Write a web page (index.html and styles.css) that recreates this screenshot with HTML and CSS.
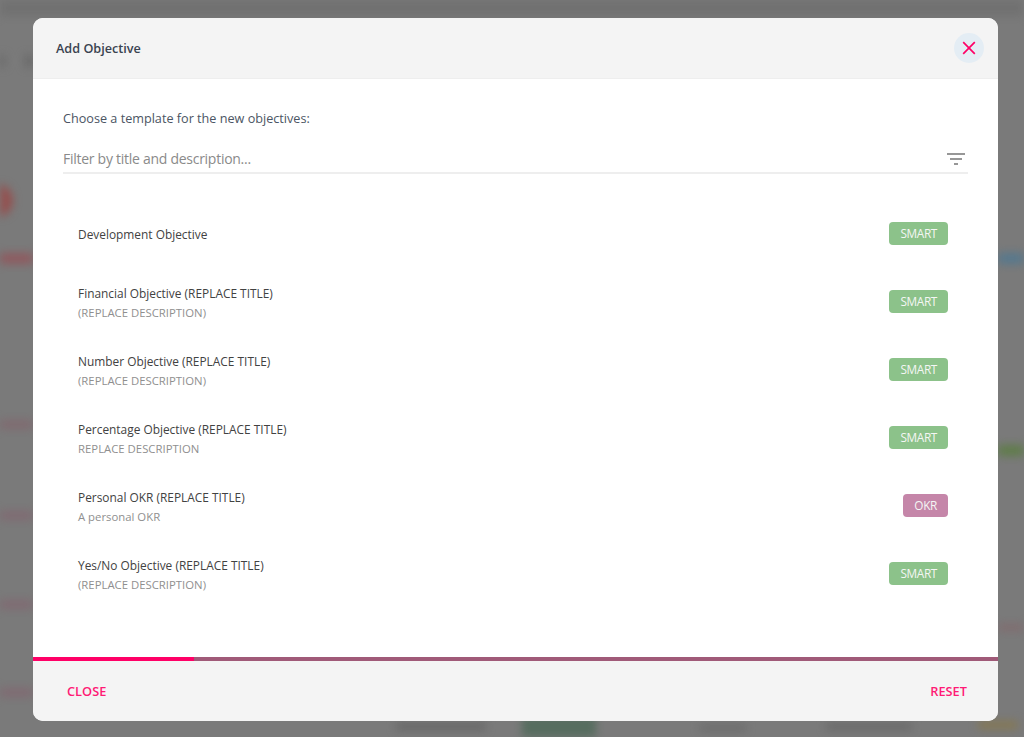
FILE: index.html
```html
<!DOCTYPE html>
<html lang="en">
<head>
<meta charset="utf-8">
<title>Add Objective</title>
<link rel="stylesheet" href="styles.css">
</head>
<body>
<div class="backdrop" aria-hidden="true">
  <span class="blob blob-topband"></span>
  <span class="blob blob-nav-a"></span>
  <span class="blob blob-nav-b"></span>
  <span class="blob blob-avatar"></span>
  <span class="blob blob-red"></span>
  <span class="blob blob-blue"></span>
  <span class="blob blob-lime"></span>
  <span class="blob blob-pink-a"></span>
  <span class="blob blob-pink-b"></span>
  <span class="blob blob-pink-c"></span>
  <span class="blob blob-pink-d"></span>
  <span class="blob blob-pink-e"></span>
  <span class="blob blob-text-a"></span>
  <span class="blob blob-green"></span>
  <span class="blob blob-text-b"></span>
  <span class="blob blob-text-c"></span>
  <span class="blob blob-yellow"></span>
</div>
<main class="modal">
  <header class="modal-header">
    <h1 class="modal-title">Add Objective</h1>
    <button class="close-btn" type="button" aria-label="Close">
      <svg class="close-icon" viewBox="0 0 14 14"><path d="M1.2 1.2l11.6 11.6M12.8 1.2L1.2 12.8"/></svg>
    </button>
  </header>
  <section class="modal-body">
    <p class="intro">Choose a template for the new objectives:</p>
    <div class="filter">
      <span class="filter-text">Filter by title and description...</span>
      <svg class="filter-icon" viewBox="0 0 18 12"><path d="M0 1h18M3 6h12M7 11h4"/></svg>
    </div>
    <ul class="list">
      <li class="item">
        <div class="item-text item-text-single"><div class="item-title">Development Objective</div></div>
        <span class="tag tag-smart">SMART</span>
      </li>
      <li class="item">
        <div class="item-text"><div class="item-title">Financial Objective (REPLACE TITLE)</div><div class="item-desc">(REPLACE DESCRIPTION)</div></div>
        <span class="tag tag-smart">SMART</span>
      </li>
      <li class="item">
        <div class="item-text"><div class="item-title">Number Objective (REPLACE TITLE)</div><div class="item-desc">(REPLACE DESCRIPTION)</div></div>
        <span class="tag tag-smart">SMART</span>
      </li>
      <li class="item">
        <div class="item-text"><div class="item-title">Percentage Objective (REPLACE TITLE)</div><div class="item-desc">REPLACE DESCRIPTION</div></div>
        <span class="tag tag-smart">SMART</span>
      </li>
      <li class="item">
        <div class="item-text"><div class="item-title">Personal OKR (REPLACE TITLE)</div><div class="item-desc">A personal OKR</div></div>
        <span class="tag tag-okr">OKR</span>
      </li>
      <li class="item">
        <div class="item-text"><div class="item-title">Yes/No Objective (REPLACE TITLE)</div><div class="item-desc">(REPLACE DESCRIPTION)</div></div>
        <span class="tag tag-smart">SMART</span>
      </li>
    </ul>
  </section>
  <div class="progress"><div class="progress-fill"></div></div>
  <footer class="modal-footer">
    <button class="action" type="button">CLOSE</button>
    <button class="action" type="button">RESET</button>
  </footer>
</main>
</body>
</html>
```
FILE: styles.css
```css
* { box-sizing: border-box; }
html, body { margin: 0; height: 100%; }
body {
  background: #7a7a7a;
  font-family: "Open Sans", "Noto Sans", sans-serif;
  overflow: hidden;
  padding: 18px 26px 16px 33px;
  position: relative;
}
.backdrop { position: absolute; inset: 0; overflow: hidden; filter: blur(4px); }
.blob { position: absolute; display: block; }
.blob-topband { left: -10px; top: -10px; width: 1044px; height: 26px; background: #717171; }
.blob-nav-a { left: -4px; top: 55px; width: 9px; height: 12px; background: #686868; }
.blob-nav-b { left: 25px; top: 55px; width: 8px; height: 12px; background: #686868; }
.blob-avatar { left: -20px; top: 184px; width: 33px; height: 33px; border-radius: 50%; background: #94504f; }
.blob-red { left: -10px; top: 253px; width: 43px; height: 11px; background: #8e5a5f; }
.blob-blue { left: 998px; top: 253px; width: 36px; height: 11px; background: #56788d; }
.blob-lime { left: 998px; top: 445px; width: 36px; height: 11px; background: #5f7c49; }
.blob-pink-a { left: -10px; top: 420px; width: 43px; height: 9px; background: #806a70; }
.blob-pink-b { left: -10px; top: 511px; width: 43px; height: 9px; background: #806a72; }
.blob-pink-c { left: -10px; top: 600px; width: 43px; height: 9px; background: #806a72; }
.blob-pink-d { left: -10px; top: 688px; width: 43px; height: 9px; background: #806a72; }
.blob-pink-e { left: 998px; top: 624px; width: 36px; height: 7px; background: #816c6f; }
.blob-text-a { left: 396px; top: 723px; width: 90px; height: 7px; background: #666; }
.blob-green { left: 522px; top: 716px; width: 74px; height: 30px; border-radius: 4px; background: #566d5f; }
.blob-text-b { left: 700px; top: 725px; width: 46px; height: 6px; background: #6a6a6a; }
.blob-text-c { left: 826px; top: 723px; width: 86px; height: 7px; background: #696969; }
.blob-yellow { left: 978px; top: 721px; width: 40px; height: 8px; border-radius: 3px; background: #857852; }

.modal {
  position: relative;
  height: 703px;
  background: #fff;
  border-radius: 10px;
  overflow: hidden;
  display: flex;
  flex-direction: column;
}
.modal-header {
  height: 61px;
  flex: none;
  background: #f4f4f4;
  border-bottom: 1px solid #eeeeee;
  display: flex;
  align-items: center;
  justify-content: space-between;
  padding: 0 14px 0 23px;
}
.modal-title { margin: 0; font-size: 12.65px; font-weight: 600; color: #3a4350; }
.close-btn {
  width: 30px; height: 30px; padding: 0; border: 0; border-radius: 50%;
  background: #e4edf4;
  display: flex; align-items: center; justify-content: center;
}
.close-icon { width: 14px; height: 14px; fill: none; stroke: #ff0066; stroke-width: 1.7; }
.modal-body { flex: 1; padding: 31px 30px 0; min-height: 0; }
.intro { margin: 0; font-size: 12.65px; line-height: 17px; color: #4b5563; }
.filter {
  margin-top: 19px;
  height: 28px;
  border-bottom: 2px solid #eeeeee;
  display: flex;
  align-items: center;
  justify-content: space-between;
  padding: 0 3px 1px 0;
}
.filter-text { font-size: 14px; letter-spacing: -0.27px; color: #8a8a8a; }
.filter-icon { width: 18px; height: 12px; fill: none; stroke: #757575; stroke-width: 1.7; }
.list { list-style: none; margin: 26px 0 0; padding: 0 20px 0 15px; }
.item {
  height: 68px;
  display: flex;
  align-items: center;
  justify-content: space-between;
}
.item-text { padding-top: 2px; }
.item-text-single { padding-top: 0; }
.item-title { font-size: 11.9px; line-height: 20px; color: #424242; }
.item-desc { font-size: 11.35px; line-height: 20px; color: #8f8f8f; }
.tag {
  height: 23px;
  margin-bottom: 2px;
  padding: 0 11px;
  border-radius: 4px;
  font-size: 11.8px;
  letter-spacing: -0.35px;
  line-height: 23px;
  color: #f4f6f4;
}
.tag-smart { background: #8cc28a; }
.tag-okr { background: #c586a9; }
.progress { height: 4px; flex: none; background: #a05a78; }
.progress-fill { width: 161px; height: 100%; background: #ff0066; }
.modal-footer {
  height: 60px;
  flex: none;
  background: #f4f4f4;
  display: flex;
  align-items: center;
  justify-content: space-between;
  padding: 0 31px 0 34px;
}
.action {
  padding: 0; border: 0; background: none;
  font-family: inherit; font-size: 12.8px; font-weight: 600; color: #ff1a75;
}
```
